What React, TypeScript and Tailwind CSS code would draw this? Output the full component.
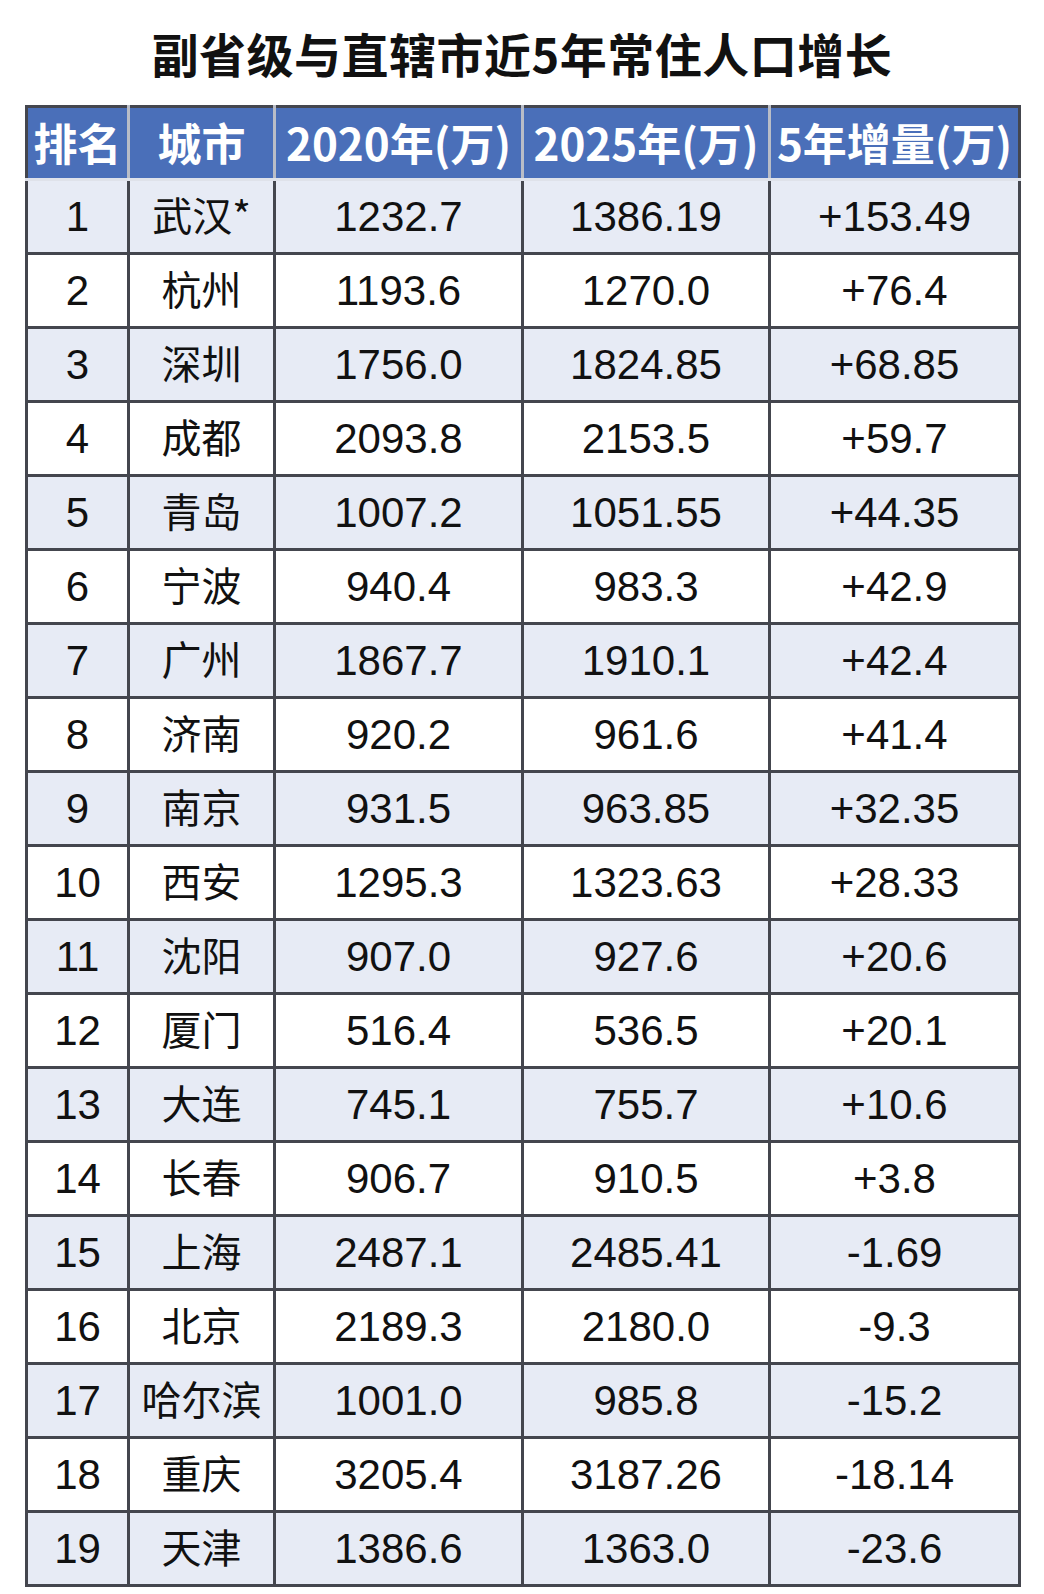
import React from "react";

const rows: [string, string, string, string, string][] = [
  ["1", "武汉*", "1232.7", "1386.19", "+153.49"],
  ["2", "杭州", "1193.6", "1270.0", "+76.4"],
  ["3", "深圳", "1756.0", "1824.85", "+68.85"],
  ["4", "成都", "2093.8", "2153.5", "+59.7"],
  ["5", "青岛", "1007.2", "1051.55", "+44.35"],
  ["6", "宁波", "940.4", "983.3", "+42.9"],
  ["7", "广州", "1867.7", "1910.1", "+42.4"],
  ["8", "济南", "920.2", "961.6", "+41.4"],
  ["9", "南京", "931.5", "963.85", "+32.35"],
  ["10", "西安", "1295.3", "1323.63", "+28.33"],
  ["11", "沈阳", "907.0", "927.6", "+20.6"],
  ["12", "厦门", "516.4", "536.5", "+20.1"],
  ["13", "大连", "745.1", "755.7", "+10.6"],
  ["14", "长春", "906.7", "910.5", "+3.8"],
  ["15", "上海", "2487.1", "2485.41", "-1.69"],
  ["16", "北京", "2189.3", "2180.0", "-9.3"],
  ["17", "哈尔滨", "1001.0", "985.8", "-15.2"],
  ["18", "重庆", "3205.4", "3187.26", "-18.14"],
  ["19", "天津", "1386.6", "1363.0", "-23.6"],
];

const headers = ["排名", "城市", "2020年(万)", "2025年(万)", "5年增量(万)"];

export default function App() {
  return (
    <div className="w-[1044px] min-h-[1594px] bg-white pt-[23px] font-['Liberation_Sans','Noto_Sans_CJK_SC',sans-serif] text-[#111]">
      <h1 className="h-[60px] text-center text-[47px] leading-[60px] font-bold tracking-[0.5px] font-['Noto_Sans_CJK_SC',sans-serif]">
        副省级与直辖市近5年常住人口增长
      </h1>
      <table className="mt-[22px] ml-[25px] w-[993px] table-fixed border-collapse border-[3px] border-[#44464e]">
        <colgroup>
          <col className="w-[102px]" />
          <col className="w-[146px]" />
          <col className="w-[248px]" />
          <col className="w-[247px]" />
          <col className="w-[250px]" />
        </colgroup>
        <thead>
          <tr className="h-[73px] bg-[#4a6fb9]">
            {headers.map((h, i) => (
              <th
                key={h}
                className={
                  "border-b-[3px] border-b-[#dfe2ea] p-0 pb-[2px] text-center text-[44px] font-bold text-white font-['Noto_Sans_CJK_SC',sans-serif] " +
                  (i > 0 ? "border-l-[3px] border-l-[#b9bdc7]" : "")
                }
              >
                {h}
              </th>
            ))}
          </tr>
        </thead>
        <tbody>
          {rows.map((r, idx) => (
            <tr key={r[0]} className={"h-[74px] " + (idx % 2 === 0 ? "bg-[#e7ebf5]" : "bg-white")}>
              <td className="border-[3px] border-[#44464e] p-0 text-center text-[42px]">{r[0]}</td>
              <td className="border-[3px] border-[#44464e] p-0 pb-[5px] text-center text-[40px] leading-[1] font-['Noto_Sans_CJK_SC',sans-serif]">
                {r[1]}
              </td>
              <td className="border-[3px] border-[#44464e] p-0 text-center text-[42px]">{r[2]}</td>
              <td className="border-[3px] border-[#44464e] p-0 text-center text-[42px]">{r[3]}</td>
              <td className="border-[3px] border-[#44464e] p-0 text-center text-[42px]">{r[4]}</td>
            </tr>
          ))}
        </tbody>
      </table>
    </div>
  );
}
